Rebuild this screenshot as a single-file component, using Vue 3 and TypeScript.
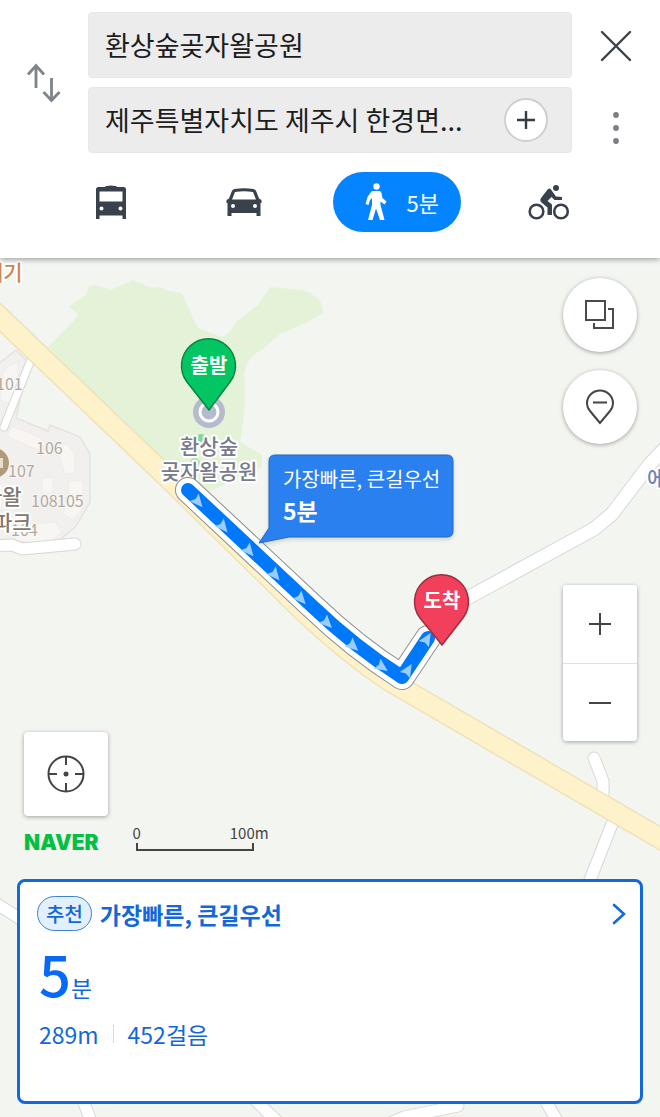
<script setup lang="ts">
import { ref } from 'vue'

interface Arrow {
  x: number
  y: number
  angle: number
}

const origin = ref('환상숲곶자왈공원')
const destination = ref('제주특별자치도 제주시 한경면...')
const mode = ref('walk')

const arrows: Arrow[] = [
  { x: 198, y: 502, angle: 50 },
  { x: 223, y: 527, angle: 50 },
  { x: 249, y: 551, angle: 50 },
  { x: 275, y: 575, angle: 50 },
  { x: 301, y: 599, angle: 48 },
  { x: 327, y: 623, angle: 45 },
  { x: 353, y: 646, angle: 42 },
  { x: 382, y: 667, angle: 35 },
  { x: 408, y: 670, angle: -58 },
  { x: 427, y: 639, angle: -58 },
]
</script>

<template>
  <div class="app">
    <header class="search">
      <button class="plain swap" type="button" aria-label="출발지와 도착지 바꾸기">
        <svg width="36" height="42" viewBox="0 0 36 42" fill="none" stroke="#7d848a" stroke-width="2.8">
          <path d="M10 26V3M2 12.500L10 3.500L18 12.500" />
          <path d="M25.500 16V39M17.500 30L25.500 38.500L33.500 30" />
        </svg>
      </button>
      <div class="fields">
        <div class="field">
          <input v-model="origin" type="text" aria-label="출발지" />
        </div>
        <div class="field">
          <input v-model="destination" type="text" aria-label="도착지" />
          <button class="add" type="button" aria-label="경유지 추가">
            <svg width="20" height="20" viewBox="0 0 20 20" stroke="#333b43" stroke-width="2.4">
              <path d="M10 1V19M1 10H19" />
            </svg>
          </button>
        </div>
      </div>
      <div class="side">
        <button class="plain" type="button" aria-label="닫기">
          <svg width="32" height="32" viewBox="0 0 32 32" stroke="#3a424a" stroke-width="2.4" stroke-linecap="round">
            <path d="M2 2L30 30M30 2L2 30" />
          </svg>
        </button>
        <button class="plain" type="button" aria-label="더보기">
          <svg width="8" height="34" viewBox="0 0 8 34" fill="#7b7f84">
            <circle cx="4" cy="4" r="2.900" />
            <circle cx="4" cy="17" r="2.900" />
            <circle cx="4" cy="30" r="2.900" />
          </svg>
        </button>
      </div>
      <nav class="modes" aria-label="이동 수단">
        <button class="mode" :class="{ active: mode === 'bus' }" type="button" aria-label="대중교통" @click="mode = 'bus'">
          <svg width="32" height="36" viewBox="0 0 32 36" fill="currentColor">
            <path fill-rule="evenodd" d="M10 3Q10.500 1.500 16 1.500T22 3H28.500Q31 3 31 5.500V35H27.500V31.500H4.500V35H1V5.500Q1 3 3.500 3ZM4.500 7.500V17.500H27.500V7.500ZM6.500 22.500A2 2 0 1 0 6.500 26.500A2 2 0 1 0 6.500 22.500M25.500 22.500A2 2 0 1 0 25.500 26.500A2 2 0 1 0 25.500 22.500" />
          </svg>
        </button>
        <button class="mode" :class="{ active: mode === 'car' }" type="button" aria-label="자동차" @click="mode = 'car'">
          <svg width="36" height="30" viewBox="0 0 36 30" fill="currentColor">
            <path fill-rule="evenodd" d="M8.500 2Q18 .3 27.500 2Q29.500 2.400 30.300 4.500L33 11.500L35.500 13V16H34.500V29H30.500V26H5.500V29H1.500V16H.5V13L3 11.500L5.700 4.500Q6.500 2.400 8.500 2ZM9 5L6 12.500H30L27 5Q18 3.500 9 5ZM7 17A2 2 0 1 0 7 21A2 2 0 1 0 7 17M29 17A2 2 0 1 0 29 21A2 2 0 1 0 29 17" />
          </svg>
        </button>
        <button class="mode" :class="{ active: mode === 'walk' }" type="button" @click="mode = 'walk'">
          <svg width="24" height="40" viewBox="0 0 24 40" fill="currentColor">
            <circle cx="12.500" cy="4.500" r="3.200" />
            <path d="M9 9H15Q17 9 17.500 11L18.500 16L22.500 19.500L20.500 22.500L16.500 19.500V23L20.500 38H16L12 26.500L8.500 38H4L8 23V16L6 18L4.500 23L1.500 22L3.500 15L7 10Q7.800 9 9 9Z" />
          </svg>
          <span>5분</span>
        </button>
        <button class="mode" :class="{ active: mode === 'bike' }" type="button" aria-label="자전거" @click="mode = 'bike'">
          <svg width="42" height="38" viewBox="0 0 42 38" fill="currentColor">
            <circle cx="28" cy="5" r="3" />
            <circle cx="8.500" cy="28.500" r="6.800" fill="none" stroke="currentColor" stroke-width="2.600" />
            <circle cx="33" cy="28.500" r="6.800" fill="none" stroke="currentColor" stroke-width="2.600" />
            <path d="M20 6Q21.500 5 23 6.500L28 13.500L34 14V17H26.500L23.500 14L19.500 18L23.500 21Q24 21.500 24 22.500V32H19.500V24.500L13.500 19.500Q11.500 17.500 13 15Z" />
          </svg>
        </button>
      </nav>
    </header>

    <main class="map">
      <svg class="canvas" viewBox="0 258 660 859" preserveAspectRatio="xMidYMin slice" role="img" aria-label="도보 경로 지도">
        <rect y="258" width="660" height="859" fill="#f2f5f0" />
        <path fill="#e4f2d8" d="M48 347L79 315L69 307L75 302L86 295L89 286L96 285L111 290L133 280L152 288L159 287L168 291L182 293L192 316L198 328L222 337L230 332L237 321L257 306L270 287L302 290Q324 297 323 313Q310 322 280 334L263 349Q245 358 244 376Q246 410 240 442L262 455V467L208 492L170 470Z" />

        <g fill="#f2f0ee" stroke="#e6e3df" stroke-width="1.500">
          <path d="M-4 366L16 350L28 362L16 418L48 431L50 425L80 437L90 454V502L76 526L54 545L-4 550Z" />
          <path fill="#f8f6f3" stroke="#f0eeea" d="M4 369L18 361V387L12 405L0 400ZM8 432L12 426L42 438L46 445L37 450L8 437ZM56 447L67 443L75 454V473L65 474ZM42 478H53V493H42ZM68 481L83 480V508L73 520L62 514L69 500ZM18 525L55 522L62 532L47 546L14 540Z" />
        </g>
        <g fill="none" stroke-linecap="round" stroke-linejoin="round">
          <g stroke="#d8d8d6">
            <path stroke-width="9" d="M30 362L4 427" />
            <path stroke-width="13" d="M-8 546L12 545L22 549L75 544" />
            <path stroke-width="15" d="M440 613L594 529L612 514L650 464L676 437" />
            <path stroke-width="13" d="M594 758L603 781V800" />
            <path stroke-width="13" d="M612 824L588 885M-8 901L30 925M83 1100L92 1124M255 1100L280 1124M545 1100L558 1122M390 1123L404 1117L458 1106" />
          </g>
          <g stroke="#fff">
            <path stroke-width="7" d="M30 362L4 427" />
            <path stroke-width="11" d="M-8 546L12 545L22 549L75 544" />
            <path stroke-width="13" d="M440 613L594 529L612 514L650 464L676 437" />
            <path stroke-width="11" d="M594 758L603 781V800" />
            <path stroke-width="11" d="M612 824L588 885M-8 901L30 925M83 1100L92 1124M255 1100L280 1124M545 1100L558 1122M390 1123L404 1117L458 1106" />
          </g>
          <path stroke="#efe2b9" stroke-width="22" d="M-15 303L168 478L298 606Q342 649 388 680L675 847" />
          <path stroke="#fef2ca" stroke-width="19" d="M-15 303L168 478L298 606Q342 649 388 680L675 847" />
        </g>

        <circle cx="-6" cy="463" r="15" fill="#b19a78" />
        <path fill="#e9dfcf" d="M0 458H3V468H0Z" />
        <g class="numbers">
          <text x="-4" y="390">101</text>
          <text x="36" y="454">106</text>
          <text x="8" y="477">107</text>
          <text x="31" y="507">108</text>
          <text x="57" y="507">105</text>
          <text x="11" y="536">104</text>
        </g>
        <g class="place">
          <text x="-16" y="280" class="food">메기</text>
          <text x="-17" y="504" class="estate">자왈</text>
          <text x="-7" y="530" class="estate">파크</text>
          <text x="647" y="486" class="lodging">에</text>
        </g>
        <circle cx="201" cy="438" r="4" fill="#7dd99b" />
        <circle cx="195" cy="463" r="4" fill="none" stroke="#a6e0b5" stroke-width="2" />
        <circle cx="209" cy="412" r="16" fill="#b6bace" />
        <circle cx="209" cy="412" r="9" fill="none" stroke="#fff" stroke-width="3" />
        <g class="place park">
          <text x="209" y="454">환상숲</text>
          <text x="209" y="479">곶자왈공원</text>
        </g>

        <g fill="none" stroke-linecap="round" stroke-linejoin="round">
          <path stroke="#8b8f8d" stroke-width="26" d="M188 490L312 606Q356 648 402 677L428 638" />
          <path stroke="#fff" stroke-width="24" d="M188 490L312 606Q356 648 402 677L428 638" />
          <path stroke="#0078fa" stroke-width="14" d="M188 490L312 606Q356 648 402 677L428 638" />
        </g>
        <path
          v-for="(arrow, i) in arrows"
          :key="i"
          fill="#9acdff"
          d="M7 0L-6 6L-4 0L-6 -6Z"
          :transform="`translate(${arrow.x} ${arrow.y}) rotate(${arrow.angle})`"
        />

        <g class="pin">
          <path fill="#03c564" stroke="#07853f" stroke-width="1.500" d="M209 410L187 382A27 27 0 1 1 230 382Z" />
          <text x="209" y="373">출발</text>
          <path fill="#f23f5b" stroke="#98303f" stroke-width="1.500" d="M442 645L420 618A27 27 0 1 1 463 618Z" />
          <text x="442" y="608">도착</text>
        </g>

        <g class="bubble">
          <path d="M275 455H447Q453 455 453 461V531Q453 537 447 537H289L259 543L269 528V461Q269 455 275 455Z" />
          <text x="283" y="487">가장빠른, 큰길우선</text>
          <text x="283" y="520" class="strong">5분</text>
        </g>
      </svg>

      <div class="overlay">
        <div class="left-tools">
          <button class="tool locate" type="button" aria-label="현재 위치">
            <svg width="38" height="38" viewBox="0 0 38 38" fill="none" stroke="#444" stroke-width="2">
              <circle cx="19" cy="19" r="17.500" />
              <path d="M19 1V10M19 28V37M1 19H10M28 19H37" />
              <circle cx="19" cy="19" r="2.500" fill="#444" stroke="none" />
            </svg>
          </button>
          <div class="legend">
            <span class="brand">NAVER</span>
            <div class="scale">
              <div class="scale-labels"><span>0</span><span>100m</span></div>
              <div class="scale-bar"></div>
            </div>
          </div>
        </div>
        <div class="right-tools">
          <button class="tool round" type="button" aria-label="지도 유형">
            <svg width="30" height="30" viewBox="0 0 30 30" fill="none" stroke="#4a4a4a" stroke-width="2">
              <path d="M1 1H20V20H1ZM23 9H28V28H9V23" />
            </svg>
          </button>
          <button class="tool round" type="button" aria-label="장소 숨기기">
            <svg width="30" height="36" viewBox="0 0 30 36" fill="none" stroke="#444" stroke-width="2">
              <path d="M15 34L5 22Q2 18.500 2 14.500A13 13 0 0 1 28 14.500Q28 18.500 25 22ZM8 13.500H22" />
            </svg>
          </button>
          <div class="zoom">
            <button type="button" aria-label="확대">
              <svg width="22" height="22" viewBox="0 0 22 22" stroke="#444" stroke-width="2"><path d="M11 0V22M0 11H22" /></svg>
            </button>
            <button type="button" aria-label="축소">
              <svg width="22" height="22" viewBox="0 0 22 22" stroke="#444" stroke-width="2"><path d="M0 11H22" /></svg>
            </button>
          </div>
        </div>
      </div>

      <section class="card">
        <div class="card-head">
          <span class="badge">추천</span>
          <h1>가장빠른, 큰길우선</h1>
          <button class="plain" type="button" aria-label="경로 상세">
            <svg width="14" height="24" viewBox="0 0 14 24" fill="none" stroke="#1268dc" stroke-width="2.600" stroke-linecap="round">
              <path d="M2 3L12 12L2 21" />
            </svg>
          </button>
        </div>
        <p class="time"><strong>5</strong>분</p>
        <p class="detail"><span>289m</span><i></i><span>452걸음</span></p>
      </section>
    </main>
  </div>
</template>

<style>
body {
  margin: 0;
}
</style>

<style scoped>
* {
  box-sizing: border-box;
}
.app {
  display: flex;
  flex-direction: column;
  min-height: 100vh;
  background: #fff;
  color: #1d1d1d;
  font-family: "Noto Sans CJK KR", "Noto Sans", sans-serif;
}
button {
  display: flex;
  align-items: center;
  justify-content: center;
  margin: 0;
  padding: 0;
  border: 0;
  background: #fff;
  color: inherit;
  font: inherit;
  cursor: pointer;
}
.plain {
  background: none;
}
svg {
  display: block;
}
.search {
  position: relative;
  z-index: 1;
  display: grid;
  grid-template-columns: 88px 1fr 88px;
  padding: 12px 0 26px;
  background: #fff;
  box-shadow: 0 1px 6px rgba(0, 0, 0, 0.4);
}
.swap {
  align-self: center;
  justify-self: center;
}
.fields {
  display: grid;
  gap: 9px;
}
.field {
  display: flex;
  align-items: center;
  height: 66px;
  padding: 0 23px 0 16px;
  border: 1px solid #e7e7e7;
  border-radius: 4px;
  background: #ececec;
}
.field input {
  flex: 1;
  min-width: 0;
  height: 48px;
  padding: 0;
  border: 0;
  outline: 0;
  background: none;
  color: #1d1d1d;
  font: 400 27px/48px "Noto Sans CJK KR", sans-serif;
}
.add {
  width: 44px;
  height: 44px;
  border: 2px solid #cfcfcf;
  border-radius: 50%;
}
.side {
  display: flex;
  flex-direction: column;
  align-items: center;
  justify-content: space-between;
  padding: 18px 0 8px;
}
.modes {
  grid-column: 1 / -1;
  display: grid;
  grid-template-columns: 1fr 1fr 172px 1fr;
  padding: 19px 44px 0;
}
.mode {
  height: 60px;
  color: #39424c;
  font-size: 22px;
}
.mode.active {
  justify-self: center;
  gap: 18px;
  width: 128px;
  padding-left: 10px;
  border-radius: 30px;
  background: #0584ff;
  color: #fff;
}
.map {
  position: relative;
  flex: 1;
  display: flex;
  flex-direction: column;
  overflow: hidden;
  background: #f2f5f0;
}
.canvas {
  position: absolute;
  inset: 0;
  width: 100%;
  height: 100%;
}
.numbers text {
  fill: #b0a9a1;
  stroke: #f7f6f3;
  stroke-width: 2px;
  paint-order: stroke;
  font-size: 16px;
}
.place text {
  stroke: #fff;
  stroke-width: 4px;
  stroke-linejoin: round;
  paint-order: stroke;
  font-size: 21px;
  font-weight: 500;
}
.place .food {
  fill: #cf8650;
}
.place .estate {
  fill: #84786e;
}
.place .lodging {
  fill: #7484b0;
}
.park text {
  fill: #777b8d;
  text-anchor: middle;
}
.pin text {
  fill: #fff;
  font-size: 20px;
  font-weight: 700;
  text-anchor: middle;
}
.bubble path {
  fill: #2b80f0;
  stroke: #2169c9;
  stroke-width: 1px;
  filter: drop-shadow(0 2px 2px rgba(0, 0, 0, 0.15));
}
.bubble text {
  fill: #fff;
  font-size: 20px;
}
.bubble .strong {
  font-size: 23px;
  font-weight: 700;
}
.overlay {
  position: relative;
  flex: 1;
  display: flex;
  align-items: flex-end;
  justify-content: space-between;
  padding: 20px 23px 28px 24px;
}
.tool,
.zoom {
  box-shadow: 0 1px 4px rgba(0, 0, 0, 0.35);
}
.locate {
  width: 84px;
  height: 84px;
  border-radius: 4px;
}
.legend {
  display: flex;
  align-items: flex-end;
  gap: 34px;
  margin-top: 7px;
}
.brand {
  color: #03c044;
  font: 900 21px/16px Inter, sans-serif;
}
.scale {
  width: 136px;
  color: #444;
  font-size: 15px;
  line-height: 20px;
}
.scale-labels {
  display: flex;
  justify-content: space-between;
}
.scale-bar {
  width: 118px;
  height: 8px;
  margin-left: 3px;
  border: 2px solid #444;
  border-top: 0;
}
.right-tools {
  align-self: flex-start;
  display: grid;
  gap: 18px;
}
.round {
  width: 74px;
  height: 74px;
  border-radius: 50%;
}
.zoom {
  margin-top: 123px;
  overflow: hidden;
  border-radius: 4px;
  background: #fff;
}
.zoom button {
  width: 74px;
  height: 78px;
}
.zoom button + button {
  border-top: 1px solid #e0e0e0;
}
.card {
  position: relative;
  min-height: 225px;
  margin: 0 17px 13px;
  padding: 14px 14px 13px 17px;
  border: 3px solid #1268dc;
  border-radius: 8px;
  background: #fff;
  color: #1268d8;
}
.card-head {
  display: flex;
  align-items: center;
  gap: 8px;
}
.badge {
  padding: 0 8px;
  border: 1px solid #3d82cf;
  border-radius: 18px;
  background: #e2f0fe;
  font-size: 20px;
  font-weight: 500;
  line-height: 33px;
}
h1 {
  flex: 1;
  margin: 0;
  font-size: 23px;
  font-weight: 700;
  line-height: 34px;
}
.time {
  margin: 14px 0 0 2px;
  font-size: 23px;
  line-height: 56px;
}
.time strong {
  color: #0869f5;
  font-size: 56px;
  font-weight: 500;
}
.detail {
  display: flex;
  align-items: center;
  gap: 14px;
  margin: 3px 0 0 2px;
  font-size: 23px;
  line-height: 32px;
}
.detail i {
  width: 1px;
  height: 18px;
  background: #d6dbe0;
}
</style>
